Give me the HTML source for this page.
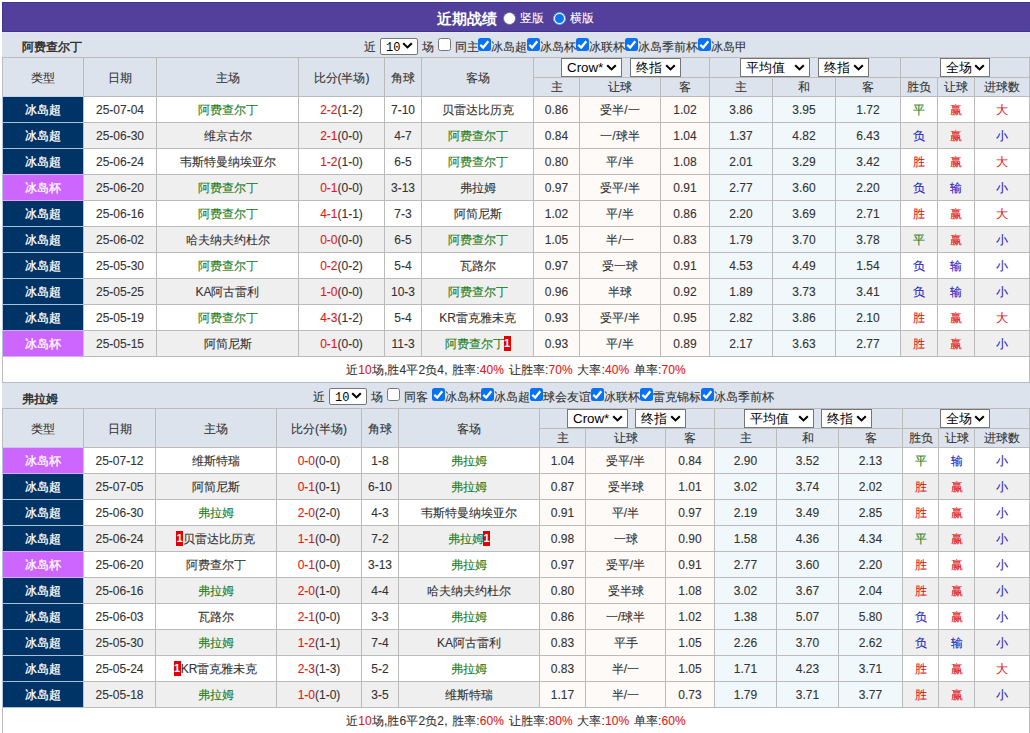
<!DOCTYPE html>
<html><head><meta charset="utf-8"><style>
html,body{margin:0;padding:0;background:#fff;}
body{width:1030px;height:733px;overflow:hidden;position:relative;font-family:"Liberation Sans",sans-serif;font-size:12px;color:#333;-webkit-text-stroke:0.1px currentColor;}
.c{position:absolute;box-sizing:border-box;text-align:center;white-space:nowrap;overflow:hidden;}
.ln{position:absolute;}
.title{position:absolute;left:2px;top:2px;width:1030px;height:30px;box-sizing:border-box;background:#52409c;border:1px solid #42368a;border-right:none;}
.team{background:#dde3ec;}
.tn{position:absolute;-webkit-text-stroke:0;font-weight:bold;font-size:12px;color:#333;white-space:nowrap;}
.hd{background:#dde3ec;}
.ht{position:absolute;text-align:center;color:#333;font-size:12px;white-space:nowrap;}
.tc{color:#fff;-webkit-text-stroke:0.3px #fff;}
.cg{color:#1c7c1c;}
.cr{color:#e01818;}
.cb{color:#1c1cc0;}
.rc{display:inline-block;-webkit-text-stroke:0;background:#e00000;color:#fff;font-weight:bold;font-size:11px;line-height:15px;height:15px;width:7px;text-align:center;vertical-align:1px;margin-left:-1px;}
.sel{position:absolute;-webkit-text-stroke:0;box-sizing:border-box;background:#fff;border:1px solid #767676;font-size:13.33px;color:#000;}
.sel .st{position:absolute;top:0;line-height:18px;}
.sel .chev{position:absolute;right:4px;top:5px;}
.flt{position:absolute;height:25px;white-space:nowrap;display:flex;align-items:center;}
.ft{font-size:12px;color:#333;margin:0 4px;}
.ft2{font-size:12px;color:#333;}
.sel10{position:absolute;-webkit-text-stroke:0;box-sizing:border-box;width:38px;height:17px;border:1px solid #767676;border-radius:2px;background:#fff;color:#000;}
.st10{position:absolute;left:5px;top:0;font-family:"Liberation Mono",monospace;font-size:12px;line-height:18px;}
.sel10 .chev{position:absolute;right:4px;top:3px;}
.ftx{position:absolute;height:25px;line-height:28px;font-size:12px;color:#333;white-space:nowrap;}
.cbx{position:absolute;width:13px;height:13px;}
.cbx svg{display:block;}
.cb0,.cb1{display:inline-block;width:13px;height:13px;margin:0 1px 0 1px;}
.cb0 svg,.cb1 svg{display:block;}
.ttl{position:absolute;top:3px;height:30px;line-height:31px;color:#fff;white-space:nowrap;}
</style></head><body>

<div class="title"></div>
<div class="ttl" style="left:437px;font-size:15px;font-weight:bold;-webkit-text-stroke:0">近期战绩</div>
<div style="position:absolute;left:503px;top:12px;width:13px;height:13px;border-radius:50%;background:#fff;box-sizing:border-box;border:1px solid #767676"></div>
<div class="ttl" style="left:520px;font-size:12px">竖版</div>
<div style="position:absolute;left:553px;top:12px;width:13px;height:13px;border-radius:50%;background:#fff;box-sizing:border-box;border:1px solid #5aa0ff"><div style="position:absolute;left:1px;top:1px;width:9px;height:9px;border-radius:50%;background:#0a74f5"></div></div>
<div class="ttl" style="left:570px;font-size:12px">横版</div>
<div style="position:absolute;left:2px;top:32px;width:1030px;height:1px;background:#e4e4fa"></div>
<div class="c team" style="left:2px;top:33px;width:1028px;height:24px;"></div>
<div class="tn" style="left:22px;top:33px;height:24px;line-height:29px">阿费查尔丁</div>
<div class="ftx" style="left:364px;top:33px">近</div><div class="sel10" style="left:380px;top:38px"><span class="st10">10</span><svg class="chev" width="11" height="7" viewBox="0 0 11 7"><path d="M1.2 1.2 L5.5 5.4 L9.8 1.2" stroke="#000" stroke-width="2.1" fill="none"/></svg></div><div class="ftx" style="left:422px;top:33px">场</div><div class="cbx" style="left:438px;top:38px"><svg width="13" height="13" viewBox="0 0 13 13"><rect x="0.5" y="0.5" width="12" height="12" rx="2" fill="#fff" stroke="#767676"/></svg></div><div class="ftx" style="left:455px;top:33px">同主</div><div class="cbx" style="left:478px;top:38px"><svg width="13" height="13" viewBox="0 0 13 13"><rect x="0" y="0" width="13" height="13" rx="2.5" fill="#0a72f0"/><path d="M2.3 6.8 L5.2 9.5 L10.3 3.2" stroke="#fff" stroke-width="2.3" fill="none"/></svg></div><div class="ftx" style="left:491px;top:33px">冰岛超</div><div class="cbx" style="left:527px;top:38px"><svg width="13" height="13" viewBox="0 0 13 13"><rect x="0" y="0" width="13" height="13" rx="2.5" fill="#0a72f0"/><path d="M2.3 6.8 L5.2 9.5 L10.3 3.2" stroke="#fff" stroke-width="2.3" fill="none"/></svg></div><div class="ftx" style="left:540px;top:33px">冰岛杯</div><div class="cbx" style="left:576px;top:38px"><svg width="13" height="13" viewBox="0 0 13 13"><rect x="0" y="0" width="13" height="13" rx="2.5" fill="#0a72f0"/><path d="M2.3 6.8 L5.2 9.5 L10.3 3.2" stroke="#fff" stroke-width="2.3" fill="none"/></svg></div><div class="ftx" style="left:589px;top:33px">冰联杯</div><div class="cbx" style="left:625px;top:38px"><svg width="13" height="13" viewBox="0 0 13 13"><rect x="0" y="0" width="13" height="13" rx="2.5" fill="#0a72f0"/><path d="M2.3 6.8 L5.2 9.5 L10.3 3.2" stroke="#fff" stroke-width="2.3" fill="none"/></svg></div><div class="ftx" style="left:638px;top:33px">冰岛季前杯</div><div class="cbx" style="left:698px;top:38px"><svg width="13" height="13" viewBox="0 0 13 13"><rect x="0" y="0" width="13" height="13" rx="2.5" fill="#0a72f0"/><path d="M2.3 6.8 L5.2 9.5 L10.3 3.2" stroke="#fff" stroke-width="2.3" fill="none"/></svg></div><div class="ftx" style="left:711px;top:33px">冰岛甲</div>
<div class="c hd" style="left:3px;top:58px;width:1026px;height:38px;"></div>
<div class="ln" style="left:2px;top:57px;width:1028px;height:1px;background:#bbb"></div>
<div class="ln" style="left:533px;top:77px;width:497px;height:1px;background:#bbb"></div>
<div class="ln" style="left:2px;top:96px;width:1028px;height:1px;background:#bbb"></div>
<div class="ht" style="left:3px;top:58px;width:80px;height:38px;line-height:40px">类型</div>
<div class="ht" style="left:84px;top:58px;width:72px;height:38px;line-height:40px">日期</div>
<div class="ht" style="left:157px;top:58px;width:141px;height:38px;line-height:40px">主场</div>
<div class="ht" style="left:299px;top:58px;width:85px;height:38px;line-height:40px">比分(半场)</div>
<div class="ht" style="left:385px;top:58px;width:36px;height:38px;line-height:40px">角球</div>
<div class="ht" style="left:422px;top:58px;width:111px;height:38px;line-height:40px">客场</div>
<div class="ht" style="left:534px;top:78px;width:45px;height:18px;line-height:19px">主</div>
<div class="ht" style="left:580px;top:78px;width:80px;height:18px;line-height:19px">让球</div>
<div class="ht" style="left:661px;top:78px;width:48px;height:18px;line-height:19px">客</div>
<div class="ht" style="left:710px;top:78px;width:62px;height:18px;line-height:19px">主</div>
<div class="ht" style="left:773px;top:78px;width:62px;height:18px;line-height:19px">和</div>
<div class="ht" style="left:836px;top:78px;width:64px;height:18px;line-height:19px">客</div>
<div class="ht" style="left:901px;top:78px;width:36px;height:18px;line-height:19px">胜负</div>
<div class="ht" style="left:938px;top:78px;width:36px;height:18px;line-height:19px">让球</div>
<div class="ht" style="left:975px;top:78px;width:54px;height:18px;line-height:19px">进球数</div>
<div class="ln" style="left:2px;top:57px;width:1px;height:39px;background:#bbb"></div>
<div class="ln" style="left:83px;top:57px;width:1px;height:39px;background:#bbb"></div>
<div class="ln" style="left:156px;top:57px;width:1px;height:39px;background:#bbb"></div>
<div class="ln" style="left:298px;top:57px;width:1px;height:39px;background:#bbb"></div>
<div class="ln" style="left:384px;top:57px;width:1px;height:39px;background:#bbb"></div>
<div class="ln" style="left:421px;top:57px;width:1px;height:39px;background:#bbb"></div>
<div class="ln" style="left:533px;top:57px;width:1px;height:39px;background:#bbb"></div>
<div class="ln" style="left:579px;top:77px;width:1px;height:19px;background:#bbb"></div>
<div class="ln" style="left:660px;top:77px;width:1px;height:19px;background:#bbb"></div>
<div class="ln" style="left:709px;top:57px;width:1px;height:39px;background:#bbb"></div>
<div class="ln" style="left:772px;top:77px;width:1px;height:19px;background:#bbb"></div>
<div class="ln" style="left:835px;top:77px;width:1px;height:19px;background:#bbb"></div>
<div class="ln" style="left:900px;top:57px;width:1px;height:39px;background:#bbb"></div>
<div class="ln" style="left:937px;top:77px;width:1px;height:19px;background:#bbb"></div>
<div class="ln" style="left:974px;top:77px;width:1px;height:19px;background:#bbb"></div>
<div class="ln" style="left:1029px;top:57px;width:1px;height:39px;background:#bbb"></div>
<div class="sel" style="left:561px;top:58px;width:61px;height:19px;border-radius:0px"><span class="st" style="left:5px">Crow*</span><svg class="chev" width="11" height="7" viewBox="0 0 11 7"><path d="M1.2 1.2 L5.5 5.4 L9.8 1.2" stroke="#000" stroke-width="2.1" fill="none"/></svg></div>
<div class="sel" style="left:630px;top:58px;width:51px;height:19px;border-radius:0px"><span class="st" style="left:5px">终指</span><svg class="chev" width="11" height="7" viewBox="0 0 11 7"><path d="M1.2 1.2 L5.5 5.4 L9.8 1.2" stroke="#000" stroke-width="2.1" fill="none"/></svg></div>
<div class="sel" style="left:740px;top:58px;width:70px;height:19px;border-radius:0px"><span class="st" style="left:5px">平均值</span><svg class="chev" width="11" height="7" viewBox="0 0 11 7"><path d="M1.2 1.2 L5.5 5.4 L9.8 1.2" stroke="#000" stroke-width="2.1" fill="none"/></svg></div>
<div class="sel" style="left:818px;top:58px;width:51px;height:19px;border-radius:0px"><span class="st" style="left:5px">终指</span><svg class="chev" width="11" height="7" viewBox="0 0 11 7"><path d="M1.2 1.2 L5.5 5.4 L9.8 1.2" stroke="#000" stroke-width="2.1" fill="none"/></svg></div>
<div class="sel" style="left:940px;top:58px;width:50px;height:19px;border-radius:0px"><span class="st" style="left:5px">全场</span><svg class="chev" width="11" height="7" viewBox="0 0 11 7"><path d="M1.2 1.2 L5.5 5.4 L9.8 1.2" stroke="#000" stroke-width="2.1" fill="none"/></svg></div>
<div class="c tc" style="left:3px;top:97px;width:80px;height:25px;background:#003366;line-height:27px">冰岛超</div>
<div class="c td" style="left:84px;top:97px;width:72px;height:25px;background:#fff;line-height:27px;">25-07-04</div>
<div class="c td" style="left:157px;top:97px;width:141px;height:25px;background:#fff;line-height:27px;"><span class="cg">阿费查尔丁</span></div>
<div class="c td" style="left:299px;top:97px;width:85px;height:25px;background:#fff;line-height:27px;"><span class="cr">2-2</span>(1-2)</div>
<div class="c td" style="left:385px;top:97px;width:36px;height:25px;background:#fff;line-height:27px;">7-10</div>
<div class="c td" style="left:422px;top:97px;width:111px;height:25px;background:#fff;line-height:27px;"><span class="">贝雷达比历克</span></div>
<div class="c td" style="left:534px;top:97px;width:45px;height:25px;background:#fefaf8;line-height:27px;">0.86</div>
<div class="c td" style="left:580px;top:97px;width:80px;height:25px;background:#fefaf8;line-height:27px;">受半/一</div>
<div class="c td" style="left:661px;top:97px;width:48px;height:25px;background:#fefaf8;line-height:27px;">1.02</div>
<div class="c td" style="left:710px;top:97px;width:62px;height:25px;background:#f0f8fb;line-height:27px;">3.86</div>
<div class="c td" style="left:773px;top:97px;width:62px;height:25px;background:#f0f8fb;line-height:27px;">3.95</div>
<div class="c td" style="left:836px;top:97px;width:64px;height:25px;background:#f0f8fb;line-height:27px;">1.72</div>
<div class="c td" style="left:901px;top:97px;width:36px;height:25px;background:#fff;line-height:27px;"><span class="cg">平</span></div>
<div class="c td" style="left:938px;top:97px;width:36px;height:25px;background:#fff;line-height:27px;"><span class="cr">赢</span></div>
<div class="c td" style="left:975px;top:97px;width:54px;height:25px;background:#fff;line-height:27px;"><span class="cr">大</span></div>
<div class="ln" style="left:2px;top:122px;width:1028px;height:1px;background:#bbb"></div>
<div class="ln" style="left:3px;top:122px;width:80px;height:1px;background:#a9c0da"></div>
<div class="ln" style="left:3px;top:96px;width:80px;height:1px;background:#c4d4e6"></div>
<div class="c tc" style="left:3px;top:123px;width:80px;height:25px;background:#003366;line-height:27px">冰岛超</div>
<div class="c td" style="left:84px;top:123px;width:72px;height:25px;background:#efefef;line-height:27px;">25-06-30</div>
<div class="c td" style="left:157px;top:123px;width:141px;height:25px;background:#efefef;line-height:27px;"><span class="">维京古尔</span></div>
<div class="c td" style="left:299px;top:123px;width:85px;height:25px;background:#efefef;line-height:27px;"><span class="cr">2-1</span>(0-0)</div>
<div class="c td" style="left:385px;top:123px;width:36px;height:25px;background:#efefef;line-height:27px;">4-7</div>
<div class="c td" style="left:422px;top:123px;width:111px;height:25px;background:#efefef;line-height:27px;"><span class="cg">阿费查尔丁</span></div>
<div class="c td" style="left:534px;top:123px;width:45px;height:25px;background:#fefaf8;line-height:27px;">0.84</div>
<div class="c td" style="left:580px;top:123px;width:80px;height:25px;background:#fefaf8;line-height:27px;">一/球半</div>
<div class="c td" style="left:661px;top:123px;width:48px;height:25px;background:#fefaf8;line-height:27px;">1.04</div>
<div class="c td" style="left:710px;top:123px;width:62px;height:25px;background:#f0f8fb;line-height:27px;">1.37</div>
<div class="c td" style="left:773px;top:123px;width:62px;height:25px;background:#f0f8fb;line-height:27px;">4.82</div>
<div class="c td" style="left:836px;top:123px;width:64px;height:25px;background:#f0f8fb;line-height:27px;">6.43</div>
<div class="c td" style="left:901px;top:123px;width:36px;height:25px;background:#efefef;line-height:27px;"><span class="cb">负</span></div>
<div class="c td" style="left:938px;top:123px;width:36px;height:25px;background:#efefef;line-height:27px;"><span class="cr">赢</span></div>
<div class="c td" style="left:975px;top:123px;width:54px;height:25px;background:#efefef;line-height:27px;"><span class="cb">小</span></div>
<div class="ln" style="left:2px;top:148px;width:1028px;height:1px;background:#bbb"></div>
<div class="ln" style="left:3px;top:148px;width:80px;height:1px;background:#a9c0da"></div>
<div class="c tc" style="left:3px;top:149px;width:80px;height:25px;background:#003366;line-height:27px">冰岛超</div>
<div class="c td" style="left:84px;top:149px;width:72px;height:25px;background:#fff;line-height:27px;">25-06-24</div>
<div class="c td" style="left:157px;top:149px;width:141px;height:25px;background:#fff;line-height:27px;"><span class="">韦斯特曼纳埃亚尔</span></div>
<div class="c td" style="left:299px;top:149px;width:85px;height:25px;background:#fff;line-height:27px;"><span class="cr">1-2</span>(1-0)</div>
<div class="c td" style="left:385px;top:149px;width:36px;height:25px;background:#fff;line-height:27px;">6-5</div>
<div class="c td" style="left:422px;top:149px;width:111px;height:25px;background:#fff;line-height:27px;"><span class="cg">阿费查尔丁</span></div>
<div class="c td" style="left:534px;top:149px;width:45px;height:25px;background:#fefaf8;line-height:27px;">0.80</div>
<div class="c td" style="left:580px;top:149px;width:80px;height:25px;background:#fefaf8;line-height:27px;">平/半</div>
<div class="c td" style="left:661px;top:149px;width:48px;height:25px;background:#fefaf8;line-height:27px;">1.08</div>
<div class="c td" style="left:710px;top:149px;width:62px;height:25px;background:#f0f8fb;line-height:27px;">2.01</div>
<div class="c td" style="left:773px;top:149px;width:62px;height:25px;background:#f0f8fb;line-height:27px;">3.29</div>
<div class="c td" style="left:836px;top:149px;width:64px;height:25px;background:#f0f8fb;line-height:27px;">3.42</div>
<div class="c td" style="left:901px;top:149px;width:36px;height:25px;background:#fff;line-height:27px;"><span class="cr">胜</span></div>
<div class="c td" style="left:938px;top:149px;width:36px;height:25px;background:#fff;line-height:27px;"><span class="cr">赢</span></div>
<div class="c td" style="left:975px;top:149px;width:54px;height:25px;background:#fff;line-height:27px;"><span class="cr">大</span></div>
<div class="ln" style="left:2px;top:174px;width:1028px;height:1px;background:#bbb"></div>
<div class="ln" style="left:3px;top:174px;width:80px;height:1px;background:#d4b0f2"></div>
<div class="c tc" style="left:3px;top:175px;width:80px;height:25px;background:#cc66ff;line-height:27px">冰岛杯</div>
<div class="c td" style="left:84px;top:175px;width:72px;height:25px;background:#efefef;line-height:27px;">25-06-20</div>
<div class="c td" style="left:157px;top:175px;width:141px;height:25px;background:#efefef;line-height:27px;"><span class="cg">阿费查尔丁</span></div>
<div class="c td" style="left:299px;top:175px;width:85px;height:25px;background:#efefef;line-height:27px;"><span class="cr">0-1</span>(0-0)</div>
<div class="c td" style="left:385px;top:175px;width:36px;height:25px;background:#efefef;line-height:27px;">3-13</div>
<div class="c td" style="left:422px;top:175px;width:111px;height:25px;background:#efefef;line-height:27px;"><span class="">弗拉姆</span></div>
<div class="c td" style="left:534px;top:175px;width:45px;height:25px;background:#fefaf8;line-height:27px;">0.97</div>
<div class="c td" style="left:580px;top:175px;width:80px;height:25px;background:#fefaf8;line-height:27px;">受平/半</div>
<div class="c td" style="left:661px;top:175px;width:48px;height:25px;background:#fefaf8;line-height:27px;">0.91</div>
<div class="c td" style="left:710px;top:175px;width:62px;height:25px;background:#f0f8fb;line-height:27px;">2.77</div>
<div class="c td" style="left:773px;top:175px;width:62px;height:25px;background:#f0f8fb;line-height:27px;">3.60</div>
<div class="c td" style="left:836px;top:175px;width:64px;height:25px;background:#f0f8fb;line-height:27px;">2.20</div>
<div class="c td" style="left:901px;top:175px;width:36px;height:25px;background:#efefef;line-height:27px;"><span class="cb">负</span></div>
<div class="c td" style="left:938px;top:175px;width:36px;height:25px;background:#efefef;line-height:27px;"><span class="cb">输</span></div>
<div class="c td" style="left:975px;top:175px;width:54px;height:25px;background:#efefef;line-height:27px;"><span class="cb">小</span></div>
<div class="ln" style="left:2px;top:200px;width:1028px;height:1px;background:#bbb"></div>
<div class="ln" style="left:3px;top:200px;width:80px;height:1px;background:#d4b0f2"></div>
<div class="c tc" style="left:3px;top:201px;width:80px;height:25px;background:#003366;line-height:27px">冰岛超</div>
<div class="c td" style="left:84px;top:201px;width:72px;height:25px;background:#fff;line-height:27px;">25-06-16</div>
<div class="c td" style="left:157px;top:201px;width:141px;height:25px;background:#fff;line-height:27px;"><span class="cg">阿费查尔丁</span></div>
<div class="c td" style="left:299px;top:201px;width:85px;height:25px;background:#fff;line-height:27px;"><span class="cr">4-1</span>(1-1)</div>
<div class="c td" style="left:385px;top:201px;width:36px;height:25px;background:#fff;line-height:27px;">7-3</div>
<div class="c td" style="left:422px;top:201px;width:111px;height:25px;background:#fff;line-height:27px;"><span class="">阿简尼斯</span></div>
<div class="c td" style="left:534px;top:201px;width:45px;height:25px;background:#fefaf8;line-height:27px;">1.02</div>
<div class="c td" style="left:580px;top:201px;width:80px;height:25px;background:#fefaf8;line-height:27px;">平/半</div>
<div class="c td" style="left:661px;top:201px;width:48px;height:25px;background:#fefaf8;line-height:27px;">0.86</div>
<div class="c td" style="left:710px;top:201px;width:62px;height:25px;background:#f0f8fb;line-height:27px;">2.20</div>
<div class="c td" style="left:773px;top:201px;width:62px;height:25px;background:#f0f8fb;line-height:27px;">3.69</div>
<div class="c td" style="left:836px;top:201px;width:64px;height:25px;background:#f0f8fb;line-height:27px;">2.71</div>
<div class="c td" style="left:901px;top:201px;width:36px;height:25px;background:#fff;line-height:27px;"><span class="cr">胜</span></div>
<div class="c td" style="left:938px;top:201px;width:36px;height:25px;background:#fff;line-height:27px;"><span class="cr">赢</span></div>
<div class="c td" style="left:975px;top:201px;width:54px;height:25px;background:#fff;line-height:27px;"><span class="cr">大</span></div>
<div class="ln" style="left:2px;top:226px;width:1028px;height:1px;background:#bbb"></div>
<div class="ln" style="left:3px;top:226px;width:80px;height:1px;background:#a9c0da"></div>
<div class="c tc" style="left:3px;top:227px;width:80px;height:25px;background:#003366;line-height:27px">冰岛超</div>
<div class="c td" style="left:84px;top:227px;width:72px;height:25px;background:#efefef;line-height:27px;">25-06-02</div>
<div class="c td" style="left:157px;top:227px;width:141px;height:25px;background:#efefef;line-height:27px;"><span class="">哈夫纳夫约杜尔</span></div>
<div class="c td" style="left:299px;top:227px;width:85px;height:25px;background:#efefef;line-height:27px;"><span class="cr">0-0</span>(0-0)</div>
<div class="c td" style="left:385px;top:227px;width:36px;height:25px;background:#efefef;line-height:27px;">6-5</div>
<div class="c td" style="left:422px;top:227px;width:111px;height:25px;background:#efefef;line-height:27px;"><span class="cg">阿费查尔丁</span></div>
<div class="c td" style="left:534px;top:227px;width:45px;height:25px;background:#fefaf8;line-height:27px;">1.05</div>
<div class="c td" style="left:580px;top:227px;width:80px;height:25px;background:#fefaf8;line-height:27px;">半/一</div>
<div class="c td" style="left:661px;top:227px;width:48px;height:25px;background:#fefaf8;line-height:27px;">0.83</div>
<div class="c td" style="left:710px;top:227px;width:62px;height:25px;background:#f0f8fb;line-height:27px;">1.79</div>
<div class="c td" style="left:773px;top:227px;width:62px;height:25px;background:#f0f8fb;line-height:27px;">3.70</div>
<div class="c td" style="left:836px;top:227px;width:64px;height:25px;background:#f0f8fb;line-height:27px;">3.78</div>
<div class="c td" style="left:901px;top:227px;width:36px;height:25px;background:#efefef;line-height:27px;"><span class="cg">平</span></div>
<div class="c td" style="left:938px;top:227px;width:36px;height:25px;background:#efefef;line-height:27px;"><span class="cr">赢</span></div>
<div class="c td" style="left:975px;top:227px;width:54px;height:25px;background:#efefef;line-height:27px;"><span class="cb">小</span></div>
<div class="ln" style="left:2px;top:252px;width:1028px;height:1px;background:#bbb"></div>
<div class="ln" style="left:3px;top:252px;width:80px;height:1px;background:#a9c0da"></div>
<div class="c tc" style="left:3px;top:253px;width:80px;height:25px;background:#003366;line-height:27px">冰岛超</div>
<div class="c td" style="left:84px;top:253px;width:72px;height:25px;background:#fff;line-height:27px;">25-05-30</div>
<div class="c td" style="left:157px;top:253px;width:141px;height:25px;background:#fff;line-height:27px;"><span class="cg">阿费查尔丁</span></div>
<div class="c td" style="left:299px;top:253px;width:85px;height:25px;background:#fff;line-height:27px;"><span class="cr">0-2</span>(0-2)</div>
<div class="c td" style="left:385px;top:253px;width:36px;height:25px;background:#fff;line-height:27px;">5-4</div>
<div class="c td" style="left:422px;top:253px;width:111px;height:25px;background:#fff;line-height:27px;"><span class="">瓦路尔</span></div>
<div class="c td" style="left:534px;top:253px;width:45px;height:25px;background:#fefaf8;line-height:27px;">0.97</div>
<div class="c td" style="left:580px;top:253px;width:80px;height:25px;background:#fefaf8;line-height:27px;">受一球</div>
<div class="c td" style="left:661px;top:253px;width:48px;height:25px;background:#fefaf8;line-height:27px;">0.91</div>
<div class="c td" style="left:710px;top:253px;width:62px;height:25px;background:#f0f8fb;line-height:27px;">4.53</div>
<div class="c td" style="left:773px;top:253px;width:62px;height:25px;background:#f0f8fb;line-height:27px;">4.49</div>
<div class="c td" style="left:836px;top:253px;width:64px;height:25px;background:#f0f8fb;line-height:27px;">1.54</div>
<div class="c td" style="left:901px;top:253px;width:36px;height:25px;background:#fff;line-height:27px;"><span class="cb">负</span></div>
<div class="c td" style="left:938px;top:253px;width:36px;height:25px;background:#fff;line-height:27px;"><span class="cb">输</span></div>
<div class="c td" style="left:975px;top:253px;width:54px;height:25px;background:#fff;line-height:27px;"><span class="cb">小</span></div>
<div class="ln" style="left:2px;top:278px;width:1028px;height:1px;background:#bbb"></div>
<div class="ln" style="left:3px;top:278px;width:80px;height:1px;background:#a9c0da"></div>
<div class="c tc" style="left:3px;top:279px;width:80px;height:25px;background:#003366;line-height:27px">冰岛超</div>
<div class="c td" style="left:84px;top:279px;width:72px;height:25px;background:#efefef;line-height:27px;">25-05-25</div>
<div class="c td" style="left:157px;top:279px;width:141px;height:25px;background:#efefef;line-height:27px;"><span class="">KA阿古雷利</span></div>
<div class="c td" style="left:299px;top:279px;width:85px;height:25px;background:#efefef;line-height:27px;"><span class="cr">1-0</span>(0-0)</div>
<div class="c td" style="left:385px;top:279px;width:36px;height:25px;background:#efefef;line-height:27px;">10-3</div>
<div class="c td" style="left:422px;top:279px;width:111px;height:25px;background:#efefef;line-height:27px;"><span class="cg">阿费查尔丁</span></div>
<div class="c td" style="left:534px;top:279px;width:45px;height:25px;background:#fefaf8;line-height:27px;">0.96</div>
<div class="c td" style="left:580px;top:279px;width:80px;height:25px;background:#fefaf8;line-height:27px;">半球</div>
<div class="c td" style="left:661px;top:279px;width:48px;height:25px;background:#fefaf8;line-height:27px;">0.92</div>
<div class="c td" style="left:710px;top:279px;width:62px;height:25px;background:#f0f8fb;line-height:27px;">1.89</div>
<div class="c td" style="left:773px;top:279px;width:62px;height:25px;background:#f0f8fb;line-height:27px;">3.73</div>
<div class="c td" style="left:836px;top:279px;width:64px;height:25px;background:#f0f8fb;line-height:27px;">3.41</div>
<div class="c td" style="left:901px;top:279px;width:36px;height:25px;background:#efefef;line-height:27px;"><span class="cb">负</span></div>
<div class="c td" style="left:938px;top:279px;width:36px;height:25px;background:#efefef;line-height:27px;"><span class="cb">输</span></div>
<div class="c td" style="left:975px;top:279px;width:54px;height:25px;background:#efefef;line-height:27px;"><span class="cb">小</span></div>
<div class="ln" style="left:2px;top:304px;width:1028px;height:1px;background:#bbb"></div>
<div class="ln" style="left:3px;top:304px;width:80px;height:1px;background:#a9c0da"></div>
<div class="c tc" style="left:3px;top:305px;width:80px;height:25px;background:#003366;line-height:27px">冰岛超</div>
<div class="c td" style="left:84px;top:305px;width:72px;height:25px;background:#fff;line-height:27px;">25-05-19</div>
<div class="c td" style="left:157px;top:305px;width:141px;height:25px;background:#fff;line-height:27px;"><span class="cg">阿费查尔丁</span></div>
<div class="c td" style="left:299px;top:305px;width:85px;height:25px;background:#fff;line-height:27px;"><span class="cr">4-3</span>(1-2)</div>
<div class="c td" style="left:385px;top:305px;width:36px;height:25px;background:#fff;line-height:27px;">5-4</div>
<div class="c td" style="left:422px;top:305px;width:111px;height:25px;background:#fff;line-height:27px;"><span class="">KR雷克雅未克</span></div>
<div class="c td" style="left:534px;top:305px;width:45px;height:25px;background:#fefaf8;line-height:27px;">0.93</div>
<div class="c td" style="left:580px;top:305px;width:80px;height:25px;background:#fefaf8;line-height:27px;">受平/半</div>
<div class="c td" style="left:661px;top:305px;width:48px;height:25px;background:#fefaf8;line-height:27px;">0.95</div>
<div class="c td" style="left:710px;top:305px;width:62px;height:25px;background:#f0f8fb;line-height:27px;">2.82</div>
<div class="c td" style="left:773px;top:305px;width:62px;height:25px;background:#f0f8fb;line-height:27px;">3.86</div>
<div class="c td" style="left:836px;top:305px;width:64px;height:25px;background:#f0f8fb;line-height:27px;">2.10</div>
<div class="c td" style="left:901px;top:305px;width:36px;height:25px;background:#fff;line-height:27px;"><span class="cr">胜</span></div>
<div class="c td" style="left:938px;top:305px;width:36px;height:25px;background:#fff;line-height:27px;"><span class="cr">赢</span></div>
<div class="c td" style="left:975px;top:305px;width:54px;height:25px;background:#fff;line-height:27px;"><span class="cr">大</span></div>
<div class="ln" style="left:2px;top:330px;width:1028px;height:1px;background:#bbb"></div>
<div class="ln" style="left:3px;top:330px;width:80px;height:1px;background:#d4b0f2"></div>
<div class="c tc" style="left:3px;top:331px;width:80px;height:25px;background:#cc66ff;line-height:27px">冰岛杯</div>
<div class="c td" style="left:84px;top:331px;width:72px;height:25px;background:#efefef;line-height:27px;">25-05-15</div>
<div class="c td" style="left:157px;top:331px;width:141px;height:25px;background:#efefef;line-height:27px;"><span class="">阿简尼斯</span></div>
<div class="c td" style="left:299px;top:331px;width:85px;height:25px;background:#efefef;line-height:27px;"><span class="cr">0-1</span>(0-0)</div>
<div class="c td" style="left:385px;top:331px;width:36px;height:25px;background:#efefef;line-height:27px;">11-3</div>
<div class="c td" style="left:422px;top:331px;width:111px;height:25px;background:#efefef;line-height:27px;"><span class="cg">阿费查尔丁</span><span class="rc">1</span></div>
<div class="c td" style="left:534px;top:331px;width:45px;height:25px;background:#fefaf8;line-height:27px;">0.93</div>
<div class="c td" style="left:580px;top:331px;width:80px;height:25px;background:#fefaf8;line-height:27px;">平/半</div>
<div class="c td" style="left:661px;top:331px;width:48px;height:25px;background:#fefaf8;line-height:27px;">0.89</div>
<div class="c td" style="left:710px;top:331px;width:62px;height:25px;background:#f0f8fb;line-height:27px;">2.17</div>
<div class="c td" style="left:773px;top:331px;width:62px;height:25px;background:#f0f8fb;line-height:27px;">3.63</div>
<div class="c td" style="left:836px;top:331px;width:64px;height:25px;background:#f0f8fb;line-height:27px;">2.77</div>
<div class="c td" style="left:901px;top:331px;width:36px;height:25px;background:#efefef;line-height:27px;"><span class="cr">胜</span></div>
<div class="c td" style="left:938px;top:331px;width:36px;height:25px;background:#efefef;line-height:27px;"><span class="cr">赢</span></div>
<div class="c td" style="left:975px;top:331px;width:54px;height:25px;background:#efefef;line-height:27px;"><span class="cb">小</span></div>
<div class="ln" style="left:2px;top:356px;width:1028px;height:1px;background:#bbb"></div>
<div class="ln" style="left:3px;top:356px;width:80px;height:1px;background:#d4b0f2"></div>
<div class="ln" style="left:2px;top:96px;width:1px;height:261px;background:#b4c6dc"></div>
<div class="ln" style="left:83px;top:96px;width:1px;height:261px;background:#b4c6dc"></div>
<div class="ln" style="left:156px;top:96px;width:1px;height:261px;background:#bbb"></div>
<div class="ln" style="left:298px;top:96px;width:1px;height:261px;background:#bbb"></div>
<div class="ln" style="left:384px;top:96px;width:1px;height:261px;background:#bbb"></div>
<div class="ln" style="left:421px;top:96px;width:1px;height:261px;background:#bbb"></div>
<div class="ln" style="left:533px;top:96px;width:1px;height:261px;background:#bbb"></div>
<div class="ln" style="left:579px;top:96px;width:1px;height:261px;background:#bbb"></div>
<div class="ln" style="left:660px;top:96px;width:1px;height:261px;background:#bbb"></div>
<div class="ln" style="left:709px;top:96px;width:1px;height:261px;background:#bbb"></div>
<div class="ln" style="left:772px;top:96px;width:1px;height:261px;background:#bbb"></div>
<div class="ln" style="left:835px;top:96px;width:1px;height:261px;background:#bbb"></div>
<div class="ln" style="left:900px;top:96px;width:1px;height:261px;background:#bbb"></div>
<div class="ln" style="left:937px;top:96px;width:1px;height:261px;background:#bbb"></div>
<div class="ln" style="left:974px;top:96px;width:1px;height:261px;background:#bbb"></div>
<div class="ln" style="left:1029px;top:96px;width:1px;height:261px;background:#bbb"></div>
<div class="c sum" style="left:3px;top:357px;width:1026px;height:25px;background:#fff;line-height:27px;word-spacing:1px;letter-spacing:0.12px">近<span class="cr">10</span>场,胜4平2负4, 胜率:<span class="cr">40%</span> 让胜率:<span class="cr">70%</span> 大率:<span class="cr">40%</span> 单率:<span class="cr">70%</span></div>
<div class="ln" style="left:2px;top:356px;width:1px;height:27px;background:#bbb"></div>
<div class="ln" style="left:1029px;top:356px;width:1px;height:27px;background:#bbb"></div>
<div class="ln" style="left:2px;top:382px;width:1028px;height:1px;background:#bbb"></div>
<div class="c team" style="left:2px;top:383px;width:1028px;height:25px;"></div>
<div class="tn" style="left:22px;top:383px;height:25px;line-height:32px">弗拉姆</div>
<div class="ftx" style="left:313px;top:383px">近</div><div class="sel10" style="left:329px;top:388px"><span class="st10">10</span><svg class="chev" width="11" height="7" viewBox="0 0 11 7"><path d="M1.2 1.2 L5.5 5.4 L9.8 1.2" stroke="#000" stroke-width="2.1" fill="none"/></svg></div><div class="ftx" style="left:371px;top:383px">场</div><div class="cbx" style="left:387px;top:388px"><svg width="13" height="13" viewBox="0 0 13 13"><rect x="0.5" y="0.5" width="12" height="12" rx="2" fill="#fff" stroke="#767676"/></svg></div><div class="ftx" style="left:404px;top:383px">同客</div><div class="cbx" style="left:432px;top:388px"><svg width="13" height="13" viewBox="0 0 13 13"><rect x="0" y="0" width="13" height="13" rx="2.5" fill="#0a72f0"/><path d="M2.3 6.8 L5.2 9.5 L10.3 3.2" stroke="#fff" stroke-width="2.3" fill="none"/></svg></div><div class="ftx" style="left:445px;top:383px">冰岛杯</div><div class="cbx" style="left:481px;top:388px"><svg width="13" height="13" viewBox="0 0 13 13"><rect x="0" y="0" width="13" height="13" rx="2.5" fill="#0a72f0"/><path d="M2.3 6.8 L5.2 9.5 L10.3 3.2" stroke="#fff" stroke-width="2.3" fill="none"/></svg></div><div class="ftx" style="left:494px;top:383px">冰岛超</div><div class="cbx" style="left:530px;top:388px"><svg width="13" height="13" viewBox="0 0 13 13"><rect x="0" y="0" width="13" height="13" rx="2.5" fill="#0a72f0"/><path d="M2.3 6.8 L5.2 9.5 L10.3 3.2" stroke="#fff" stroke-width="2.3" fill="none"/></svg></div><div class="ftx" style="left:543px;top:383px">球会友谊</div><div class="cbx" style="left:591px;top:388px"><svg width="13" height="13" viewBox="0 0 13 13"><rect x="0" y="0" width="13" height="13" rx="2.5" fill="#0a72f0"/><path d="M2.3 6.8 L5.2 9.5 L10.3 3.2" stroke="#fff" stroke-width="2.3" fill="none"/></svg></div><div class="ftx" style="left:604px;top:383px">冰联杯</div><div class="cbx" style="left:640px;top:388px"><svg width="13" height="13" viewBox="0 0 13 13"><rect x="0" y="0" width="13" height="13" rx="2.5" fill="#0a72f0"/><path d="M2.3 6.8 L5.2 9.5 L10.3 3.2" stroke="#fff" stroke-width="2.3" fill="none"/></svg></div><div class="ftx" style="left:653px;top:383px">雷克锦标</div><div class="cbx" style="left:701px;top:388px"><svg width="13" height="13" viewBox="0 0 13 13"><rect x="0" y="0" width="13" height="13" rx="2.5" fill="#0a72f0"/><path d="M2.3 6.8 L5.2 9.5 L10.3 3.2" stroke="#fff" stroke-width="2.3" fill="none"/></svg></div><div class="ftx" style="left:714px;top:383px">冰岛季前杯</div>
<div class="c hd" style="left:3px;top:409px;width:1026px;height:38px;"></div>
<div class="ln" style="left:2px;top:408px;width:1028px;height:1px;background:#bbb"></div>
<div class="ln" style="left:539px;top:428px;width:491px;height:1px;background:#bbb"></div>
<div class="ln" style="left:2px;top:447px;width:1028px;height:1px;background:#bbb"></div>
<div class="ht" style="left:3px;top:409px;width:80px;height:38px;line-height:40px">类型</div>
<div class="ht" style="left:84px;top:409px;width:71px;height:38px;line-height:40px">日期</div>
<div class="ht" style="left:156px;top:409px;width:120px;height:38px;line-height:40px">主场</div>
<div class="ht" style="left:277px;top:409px;width:84px;height:38px;line-height:40px">比分(半场)</div>
<div class="ht" style="left:362px;top:409px;width:36px;height:38px;line-height:40px">角球</div>
<div class="ht" style="left:399px;top:409px;width:140px;height:38px;line-height:40px">客场</div>
<div class="ht" style="left:540px;top:429px;width:45px;height:18px;line-height:19px">主</div>
<div class="ht" style="left:586px;top:429px;width:79px;height:18px;line-height:19px">让球</div>
<div class="ht" style="left:666px;top:429px;width:48px;height:18px;line-height:19px">客</div>
<div class="ht" style="left:715px;top:429px;width:61px;height:18px;line-height:19px">主</div>
<div class="ht" style="left:777px;top:429px;width:61px;height:18px;line-height:19px">和</div>
<div class="ht" style="left:839px;top:429px;width:63px;height:18px;line-height:19px">客</div>
<div class="ht" style="left:903px;top:429px;width:35px;height:18px;line-height:19px">胜负</div>
<div class="ht" style="left:939px;top:429px;width:35px;height:18px;line-height:19px">让球</div>
<div class="ht" style="left:975px;top:429px;width:54px;height:18px;line-height:19px">进球数</div>
<div class="ln" style="left:2px;top:408px;width:1px;height:39px;background:#bbb"></div>
<div class="ln" style="left:83px;top:408px;width:1px;height:39px;background:#bbb"></div>
<div class="ln" style="left:155px;top:408px;width:1px;height:39px;background:#bbb"></div>
<div class="ln" style="left:276px;top:408px;width:1px;height:39px;background:#bbb"></div>
<div class="ln" style="left:361px;top:408px;width:1px;height:39px;background:#bbb"></div>
<div class="ln" style="left:398px;top:408px;width:1px;height:39px;background:#bbb"></div>
<div class="ln" style="left:539px;top:408px;width:1px;height:39px;background:#bbb"></div>
<div class="ln" style="left:585px;top:428px;width:1px;height:19px;background:#bbb"></div>
<div class="ln" style="left:665px;top:428px;width:1px;height:19px;background:#bbb"></div>
<div class="ln" style="left:714px;top:408px;width:1px;height:39px;background:#bbb"></div>
<div class="ln" style="left:776px;top:428px;width:1px;height:19px;background:#bbb"></div>
<div class="ln" style="left:838px;top:428px;width:1px;height:19px;background:#bbb"></div>
<div class="ln" style="left:902px;top:408px;width:1px;height:39px;background:#bbb"></div>
<div class="ln" style="left:938px;top:428px;width:1px;height:19px;background:#bbb"></div>
<div class="ln" style="left:974px;top:428px;width:1px;height:19px;background:#bbb"></div>
<div class="ln" style="left:1029px;top:408px;width:1px;height:39px;background:#bbb"></div>
<div class="sel" style="left:567px;top:409px;width:61px;height:19px;border-radius:0px"><span class="st" style="left:5px">Crow*</span><svg class="chev" width="11" height="7" viewBox="0 0 11 7"><path d="M1.2 1.2 L5.5 5.4 L9.8 1.2" stroke="#000" stroke-width="2.1" fill="none"/></svg></div>
<div class="sel" style="left:635px;top:409px;width:51px;height:19px;border-radius:0px"><span class="st" style="left:5px">终指</span><svg class="chev" width="11" height="7" viewBox="0 0 11 7"><path d="M1.2 1.2 L5.5 5.4 L9.8 1.2" stroke="#000" stroke-width="2.1" fill="none"/></svg></div>
<div class="sel" style="left:744px;top:409px;width:70px;height:19px;border-radius:0px"><span class="st" style="left:5px">平均值</span><svg class="chev" width="11" height="7" viewBox="0 0 11 7"><path d="M1.2 1.2 L5.5 5.4 L9.8 1.2" stroke="#000" stroke-width="2.1" fill="none"/></svg></div>
<div class="sel" style="left:821px;top:409px;width:51px;height:19px;border-radius:0px"><span class="st" style="left:5px">终指</span><svg class="chev" width="11" height="7" viewBox="0 0 11 7"><path d="M1.2 1.2 L5.5 5.4 L9.8 1.2" stroke="#000" stroke-width="2.1" fill="none"/></svg></div>
<div class="sel" style="left:940px;top:409px;width:50px;height:19px;border-radius:0px"><span class="st" style="left:5px">全场</span><svg class="chev" width="11" height="7" viewBox="0 0 11 7"><path d="M1.2 1.2 L5.5 5.4 L9.8 1.2" stroke="#000" stroke-width="2.1" fill="none"/></svg></div>
<div class="c tc" style="left:3px;top:448px;width:80px;height:25px;background:#cc66ff;line-height:27px">冰岛杯</div>
<div class="c td" style="left:84px;top:448px;width:71px;height:25px;background:#fff;line-height:27px;">25-07-12</div>
<div class="c td" style="left:156px;top:448px;width:120px;height:25px;background:#fff;line-height:27px;"><span class="">维斯特瑞</span></div>
<div class="c td" style="left:277px;top:448px;width:84px;height:25px;background:#fff;line-height:27px;"><span class="cr">0-0</span>(0-0)</div>
<div class="c td" style="left:362px;top:448px;width:36px;height:25px;background:#fff;line-height:27px;">1-8</div>
<div class="c td" style="left:399px;top:448px;width:140px;height:25px;background:#fff;line-height:27px;"><span class="cg">弗拉姆</span></div>
<div class="c td" style="left:540px;top:448px;width:45px;height:25px;background:#fefaf8;line-height:27px;">1.04</div>
<div class="c td" style="left:586px;top:448px;width:79px;height:25px;background:#fefaf8;line-height:27px;">受平/半</div>
<div class="c td" style="left:666px;top:448px;width:48px;height:25px;background:#fefaf8;line-height:27px;">0.84</div>
<div class="c td" style="left:715px;top:448px;width:61px;height:25px;background:#f0f8fb;line-height:27px;">2.90</div>
<div class="c td" style="left:777px;top:448px;width:61px;height:25px;background:#f0f8fb;line-height:27px;">3.52</div>
<div class="c td" style="left:839px;top:448px;width:63px;height:25px;background:#f0f8fb;line-height:27px;">2.13</div>
<div class="c td" style="left:903px;top:448px;width:35px;height:25px;background:#fff;line-height:27px;"><span class="cg">平</span></div>
<div class="c td" style="left:939px;top:448px;width:35px;height:25px;background:#fff;line-height:27px;"><span class="cb">输</span></div>
<div class="c td" style="left:975px;top:448px;width:54px;height:25px;background:#fff;line-height:27px;"><span class="cb">小</span></div>
<div class="ln" style="left:2px;top:473px;width:1028px;height:1px;background:#bbb"></div>
<div class="ln" style="left:3px;top:473px;width:80px;height:1px;background:#d4b0f2"></div>
<div class="ln" style="left:3px;top:447px;width:80px;height:1px;background:#d8c0f4"></div>
<div class="c tc" style="left:3px;top:474px;width:80px;height:25px;background:#003366;line-height:27px">冰岛超</div>
<div class="c td" style="left:84px;top:474px;width:71px;height:25px;background:#efefef;line-height:27px;">25-07-05</div>
<div class="c td" style="left:156px;top:474px;width:120px;height:25px;background:#efefef;line-height:27px;"><span class="">阿简尼斯</span></div>
<div class="c td" style="left:277px;top:474px;width:84px;height:25px;background:#efefef;line-height:27px;"><span class="cr">0-1</span>(0-1)</div>
<div class="c td" style="left:362px;top:474px;width:36px;height:25px;background:#efefef;line-height:27px;">6-10</div>
<div class="c td" style="left:399px;top:474px;width:140px;height:25px;background:#efefef;line-height:27px;"><span class="cg">弗拉姆</span></div>
<div class="c td" style="left:540px;top:474px;width:45px;height:25px;background:#fefaf8;line-height:27px;">0.87</div>
<div class="c td" style="left:586px;top:474px;width:79px;height:25px;background:#fefaf8;line-height:27px;">受半球</div>
<div class="c td" style="left:666px;top:474px;width:48px;height:25px;background:#fefaf8;line-height:27px;">1.01</div>
<div class="c td" style="left:715px;top:474px;width:61px;height:25px;background:#f0f8fb;line-height:27px;">3.02</div>
<div class="c td" style="left:777px;top:474px;width:61px;height:25px;background:#f0f8fb;line-height:27px;">3.74</div>
<div class="c td" style="left:839px;top:474px;width:63px;height:25px;background:#f0f8fb;line-height:27px;">2.02</div>
<div class="c td" style="left:903px;top:474px;width:35px;height:25px;background:#efefef;line-height:27px;"><span class="cr">胜</span></div>
<div class="c td" style="left:939px;top:474px;width:35px;height:25px;background:#efefef;line-height:27px;"><span class="cr">赢</span></div>
<div class="c td" style="left:975px;top:474px;width:54px;height:25px;background:#efefef;line-height:27px;"><span class="cb">小</span></div>
<div class="ln" style="left:2px;top:499px;width:1028px;height:1px;background:#bbb"></div>
<div class="ln" style="left:3px;top:499px;width:80px;height:1px;background:#a9c0da"></div>
<div class="c tc" style="left:3px;top:500px;width:80px;height:25px;background:#003366;line-height:27px">冰岛超</div>
<div class="c td" style="left:84px;top:500px;width:71px;height:25px;background:#fff;line-height:27px;">25-06-30</div>
<div class="c td" style="left:156px;top:500px;width:120px;height:25px;background:#fff;line-height:27px;"><span class="cg">弗拉姆</span></div>
<div class="c td" style="left:277px;top:500px;width:84px;height:25px;background:#fff;line-height:27px;"><span class="cr">2-0</span>(2-0)</div>
<div class="c td" style="left:362px;top:500px;width:36px;height:25px;background:#fff;line-height:27px;">4-3</div>
<div class="c td" style="left:399px;top:500px;width:140px;height:25px;background:#fff;line-height:27px;"><span class="">韦斯特曼纳埃亚尔</span></div>
<div class="c td" style="left:540px;top:500px;width:45px;height:25px;background:#fefaf8;line-height:27px;">0.91</div>
<div class="c td" style="left:586px;top:500px;width:79px;height:25px;background:#fefaf8;line-height:27px;">平/半</div>
<div class="c td" style="left:666px;top:500px;width:48px;height:25px;background:#fefaf8;line-height:27px;">0.97</div>
<div class="c td" style="left:715px;top:500px;width:61px;height:25px;background:#f0f8fb;line-height:27px;">2.19</div>
<div class="c td" style="left:777px;top:500px;width:61px;height:25px;background:#f0f8fb;line-height:27px;">3.49</div>
<div class="c td" style="left:839px;top:500px;width:63px;height:25px;background:#f0f8fb;line-height:27px;">2.85</div>
<div class="c td" style="left:903px;top:500px;width:35px;height:25px;background:#fff;line-height:27px;"><span class="cr">胜</span></div>
<div class="c td" style="left:939px;top:500px;width:35px;height:25px;background:#fff;line-height:27px;"><span class="cr">赢</span></div>
<div class="c td" style="left:975px;top:500px;width:54px;height:25px;background:#fff;line-height:27px;"><span class="cb">小</span></div>
<div class="ln" style="left:2px;top:525px;width:1028px;height:1px;background:#bbb"></div>
<div class="ln" style="left:3px;top:525px;width:80px;height:1px;background:#a9c0da"></div>
<div class="c tc" style="left:3px;top:526px;width:80px;height:25px;background:#003366;line-height:27px">冰岛超</div>
<div class="c td" style="left:84px;top:526px;width:71px;height:25px;background:#efefef;line-height:27px;">25-06-24</div>
<div class="c td" style="left:156px;top:526px;width:120px;height:25px;background:#efefef;line-height:27px;"><span class="rc">1</span><span class="">贝雷达比历克</span></div>
<div class="c td" style="left:277px;top:526px;width:84px;height:25px;background:#efefef;line-height:27px;"><span class="cr">1-1</span>(0-0)</div>
<div class="c td" style="left:362px;top:526px;width:36px;height:25px;background:#efefef;line-height:27px;">7-2</div>
<div class="c td" style="left:399px;top:526px;width:140px;height:25px;background:#efefef;line-height:27px;"><span class="cg">弗拉姆</span><span class="rc">1</span></div>
<div class="c td" style="left:540px;top:526px;width:45px;height:25px;background:#fefaf8;line-height:27px;">0.98</div>
<div class="c td" style="left:586px;top:526px;width:79px;height:25px;background:#fefaf8;line-height:27px;">一球</div>
<div class="c td" style="left:666px;top:526px;width:48px;height:25px;background:#fefaf8;line-height:27px;">0.90</div>
<div class="c td" style="left:715px;top:526px;width:61px;height:25px;background:#f0f8fb;line-height:27px;">1.58</div>
<div class="c td" style="left:777px;top:526px;width:61px;height:25px;background:#f0f8fb;line-height:27px;">4.36</div>
<div class="c td" style="left:839px;top:526px;width:63px;height:25px;background:#f0f8fb;line-height:27px;">4.34</div>
<div class="c td" style="left:903px;top:526px;width:35px;height:25px;background:#efefef;line-height:27px;"><span class="cg">平</span></div>
<div class="c td" style="left:939px;top:526px;width:35px;height:25px;background:#efefef;line-height:27px;"><span class="cr">赢</span></div>
<div class="c td" style="left:975px;top:526px;width:54px;height:25px;background:#efefef;line-height:27px;"><span class="cb">小</span></div>
<div class="ln" style="left:2px;top:551px;width:1028px;height:1px;background:#bbb"></div>
<div class="ln" style="left:3px;top:551px;width:80px;height:1px;background:#d4b0f2"></div>
<div class="c tc" style="left:3px;top:552px;width:80px;height:25px;background:#cc66ff;line-height:27px">冰岛杯</div>
<div class="c td" style="left:84px;top:552px;width:71px;height:25px;background:#fff;line-height:27px;">25-06-20</div>
<div class="c td" style="left:156px;top:552px;width:120px;height:25px;background:#fff;line-height:27px;"><span class="">阿费查尔丁</span></div>
<div class="c td" style="left:277px;top:552px;width:84px;height:25px;background:#fff;line-height:27px;"><span class="cr">0-1</span>(0-0)</div>
<div class="c td" style="left:362px;top:552px;width:36px;height:25px;background:#fff;line-height:27px;">3-13</div>
<div class="c td" style="left:399px;top:552px;width:140px;height:25px;background:#fff;line-height:27px;"><span class="cg">弗拉姆</span></div>
<div class="c td" style="left:540px;top:552px;width:45px;height:25px;background:#fefaf8;line-height:27px;">0.97</div>
<div class="c td" style="left:586px;top:552px;width:79px;height:25px;background:#fefaf8;line-height:27px;">受平/半</div>
<div class="c td" style="left:666px;top:552px;width:48px;height:25px;background:#fefaf8;line-height:27px;">0.91</div>
<div class="c td" style="left:715px;top:552px;width:61px;height:25px;background:#f0f8fb;line-height:27px;">2.77</div>
<div class="c td" style="left:777px;top:552px;width:61px;height:25px;background:#f0f8fb;line-height:27px;">3.60</div>
<div class="c td" style="left:839px;top:552px;width:63px;height:25px;background:#f0f8fb;line-height:27px;">2.20</div>
<div class="c td" style="left:903px;top:552px;width:35px;height:25px;background:#fff;line-height:27px;"><span class="cr">胜</span></div>
<div class="c td" style="left:939px;top:552px;width:35px;height:25px;background:#fff;line-height:27px;"><span class="cr">赢</span></div>
<div class="c td" style="left:975px;top:552px;width:54px;height:25px;background:#fff;line-height:27px;"><span class="cb">小</span></div>
<div class="ln" style="left:2px;top:577px;width:1028px;height:1px;background:#bbb"></div>
<div class="ln" style="left:3px;top:577px;width:80px;height:1px;background:#d4b0f2"></div>
<div class="c tc" style="left:3px;top:578px;width:80px;height:25px;background:#003366;line-height:27px">冰岛超</div>
<div class="c td" style="left:84px;top:578px;width:71px;height:25px;background:#efefef;line-height:27px;">25-06-16</div>
<div class="c td" style="left:156px;top:578px;width:120px;height:25px;background:#efefef;line-height:27px;"><span class="cg">弗拉姆</span></div>
<div class="c td" style="left:277px;top:578px;width:84px;height:25px;background:#efefef;line-height:27px;"><span class="cr">2-0</span>(1-0)</div>
<div class="c td" style="left:362px;top:578px;width:36px;height:25px;background:#efefef;line-height:27px;">4-4</div>
<div class="c td" style="left:399px;top:578px;width:140px;height:25px;background:#efefef;line-height:27px;"><span class="">哈夫纳夫约杜尔</span></div>
<div class="c td" style="left:540px;top:578px;width:45px;height:25px;background:#fefaf8;line-height:27px;">0.80</div>
<div class="c td" style="left:586px;top:578px;width:79px;height:25px;background:#fefaf8;line-height:27px;">受半球</div>
<div class="c td" style="left:666px;top:578px;width:48px;height:25px;background:#fefaf8;line-height:27px;">1.08</div>
<div class="c td" style="left:715px;top:578px;width:61px;height:25px;background:#f0f8fb;line-height:27px;">3.02</div>
<div class="c td" style="left:777px;top:578px;width:61px;height:25px;background:#f0f8fb;line-height:27px;">3.67</div>
<div class="c td" style="left:839px;top:578px;width:63px;height:25px;background:#f0f8fb;line-height:27px;">2.04</div>
<div class="c td" style="left:903px;top:578px;width:35px;height:25px;background:#efefef;line-height:27px;"><span class="cr">胜</span></div>
<div class="c td" style="left:939px;top:578px;width:35px;height:25px;background:#efefef;line-height:27px;"><span class="cr">赢</span></div>
<div class="c td" style="left:975px;top:578px;width:54px;height:25px;background:#efefef;line-height:27px;"><span class="cb">小</span></div>
<div class="ln" style="left:2px;top:603px;width:1028px;height:1px;background:#bbb"></div>
<div class="ln" style="left:3px;top:603px;width:80px;height:1px;background:#a9c0da"></div>
<div class="c tc" style="left:3px;top:604px;width:80px;height:25px;background:#003366;line-height:27px">冰岛超</div>
<div class="c td" style="left:84px;top:604px;width:71px;height:25px;background:#fff;line-height:27px;">25-06-03</div>
<div class="c td" style="left:156px;top:604px;width:120px;height:25px;background:#fff;line-height:27px;"><span class="">瓦路尔</span></div>
<div class="c td" style="left:277px;top:604px;width:84px;height:25px;background:#fff;line-height:27px;"><span class="cr">2-1</span>(0-0)</div>
<div class="c td" style="left:362px;top:604px;width:36px;height:25px;background:#fff;line-height:27px;">3-3</div>
<div class="c td" style="left:399px;top:604px;width:140px;height:25px;background:#fff;line-height:27px;"><span class="cg">弗拉姆</span></div>
<div class="c td" style="left:540px;top:604px;width:45px;height:25px;background:#fefaf8;line-height:27px;">0.86</div>
<div class="c td" style="left:586px;top:604px;width:79px;height:25px;background:#fefaf8;line-height:27px;">一/球半</div>
<div class="c td" style="left:666px;top:604px;width:48px;height:25px;background:#fefaf8;line-height:27px;">1.02</div>
<div class="c td" style="left:715px;top:604px;width:61px;height:25px;background:#f0f8fb;line-height:27px;">1.38</div>
<div class="c td" style="left:777px;top:604px;width:61px;height:25px;background:#f0f8fb;line-height:27px;">5.07</div>
<div class="c td" style="left:839px;top:604px;width:63px;height:25px;background:#f0f8fb;line-height:27px;">5.80</div>
<div class="c td" style="left:903px;top:604px;width:35px;height:25px;background:#fff;line-height:27px;"><span class="cb">负</span></div>
<div class="c td" style="left:939px;top:604px;width:35px;height:25px;background:#fff;line-height:27px;"><span class="cr">赢</span></div>
<div class="c td" style="left:975px;top:604px;width:54px;height:25px;background:#fff;line-height:27px;"><span class="cb">小</span></div>
<div class="ln" style="left:2px;top:629px;width:1028px;height:1px;background:#bbb"></div>
<div class="ln" style="left:3px;top:629px;width:80px;height:1px;background:#a9c0da"></div>
<div class="c tc" style="left:3px;top:630px;width:80px;height:25px;background:#003366;line-height:27px">冰岛超</div>
<div class="c td" style="left:84px;top:630px;width:71px;height:25px;background:#efefef;line-height:27px;">25-05-30</div>
<div class="c td" style="left:156px;top:630px;width:120px;height:25px;background:#efefef;line-height:27px;"><span class="cg">弗拉姆</span></div>
<div class="c td" style="left:277px;top:630px;width:84px;height:25px;background:#efefef;line-height:27px;"><span class="cr">1-2</span>(1-1)</div>
<div class="c td" style="left:362px;top:630px;width:36px;height:25px;background:#efefef;line-height:27px;">7-4</div>
<div class="c td" style="left:399px;top:630px;width:140px;height:25px;background:#efefef;line-height:27px;"><span class="">KA阿古雷利</span></div>
<div class="c td" style="left:540px;top:630px;width:45px;height:25px;background:#fefaf8;line-height:27px;">0.83</div>
<div class="c td" style="left:586px;top:630px;width:79px;height:25px;background:#fefaf8;line-height:27px;">平手</div>
<div class="c td" style="left:666px;top:630px;width:48px;height:25px;background:#fefaf8;line-height:27px;">1.05</div>
<div class="c td" style="left:715px;top:630px;width:61px;height:25px;background:#f0f8fb;line-height:27px;">2.26</div>
<div class="c td" style="left:777px;top:630px;width:61px;height:25px;background:#f0f8fb;line-height:27px;">3.70</div>
<div class="c td" style="left:839px;top:630px;width:63px;height:25px;background:#f0f8fb;line-height:27px;">2.62</div>
<div class="c td" style="left:903px;top:630px;width:35px;height:25px;background:#efefef;line-height:27px;"><span class="cb">负</span></div>
<div class="c td" style="left:939px;top:630px;width:35px;height:25px;background:#efefef;line-height:27px;"><span class="cb">输</span></div>
<div class="c td" style="left:975px;top:630px;width:54px;height:25px;background:#efefef;line-height:27px;"><span class="cb">小</span></div>
<div class="ln" style="left:2px;top:655px;width:1028px;height:1px;background:#bbb"></div>
<div class="ln" style="left:3px;top:655px;width:80px;height:1px;background:#a9c0da"></div>
<div class="c tc" style="left:3px;top:656px;width:80px;height:25px;background:#003366;line-height:27px">冰岛超</div>
<div class="c td" style="left:84px;top:656px;width:71px;height:25px;background:#fff;line-height:27px;">25-05-24</div>
<div class="c td" style="left:156px;top:656px;width:120px;height:25px;background:#fff;line-height:27px;"><span class="rc">1</span><span class="">KR雷克雅未克</span></div>
<div class="c td" style="left:277px;top:656px;width:84px;height:25px;background:#fff;line-height:27px;"><span class="cr">2-3</span>(1-3)</div>
<div class="c td" style="left:362px;top:656px;width:36px;height:25px;background:#fff;line-height:27px;">5-2</div>
<div class="c td" style="left:399px;top:656px;width:140px;height:25px;background:#fff;line-height:27px;"><span class="cg">弗拉姆</span></div>
<div class="c td" style="left:540px;top:656px;width:45px;height:25px;background:#fefaf8;line-height:27px;">0.83</div>
<div class="c td" style="left:586px;top:656px;width:79px;height:25px;background:#fefaf8;line-height:27px;">半/一</div>
<div class="c td" style="left:666px;top:656px;width:48px;height:25px;background:#fefaf8;line-height:27px;">1.05</div>
<div class="c td" style="left:715px;top:656px;width:61px;height:25px;background:#f0f8fb;line-height:27px;">1.71</div>
<div class="c td" style="left:777px;top:656px;width:61px;height:25px;background:#f0f8fb;line-height:27px;">4.23</div>
<div class="c td" style="left:839px;top:656px;width:63px;height:25px;background:#f0f8fb;line-height:27px;">3.71</div>
<div class="c td" style="left:903px;top:656px;width:35px;height:25px;background:#fff;line-height:27px;"><span class="cr">胜</span></div>
<div class="c td" style="left:939px;top:656px;width:35px;height:25px;background:#fff;line-height:27px;"><span class="cr">赢</span></div>
<div class="c td" style="left:975px;top:656px;width:54px;height:25px;background:#fff;line-height:27px;"><span class="cr">大</span></div>
<div class="ln" style="left:2px;top:681px;width:1028px;height:1px;background:#bbb"></div>
<div class="ln" style="left:3px;top:681px;width:80px;height:1px;background:#a9c0da"></div>
<div class="c tc" style="left:3px;top:682px;width:80px;height:25px;background:#003366;line-height:27px">冰岛超</div>
<div class="c td" style="left:84px;top:682px;width:71px;height:25px;background:#efefef;line-height:27px;">25-05-18</div>
<div class="c td" style="left:156px;top:682px;width:120px;height:25px;background:#efefef;line-height:27px;"><span class="cg">弗拉姆</span></div>
<div class="c td" style="left:277px;top:682px;width:84px;height:25px;background:#efefef;line-height:27px;"><span class="cr">1-0</span>(1-0)</div>
<div class="c td" style="left:362px;top:682px;width:36px;height:25px;background:#efefef;line-height:27px;">3-5</div>
<div class="c td" style="left:399px;top:682px;width:140px;height:25px;background:#efefef;line-height:27px;"><span class="">维斯特瑞</span></div>
<div class="c td" style="left:540px;top:682px;width:45px;height:25px;background:#fefaf8;line-height:27px;">1.17</div>
<div class="c td" style="left:586px;top:682px;width:79px;height:25px;background:#fefaf8;line-height:27px;">半/一</div>
<div class="c td" style="left:666px;top:682px;width:48px;height:25px;background:#fefaf8;line-height:27px;">0.73</div>
<div class="c td" style="left:715px;top:682px;width:61px;height:25px;background:#f0f8fb;line-height:27px;">1.79</div>
<div class="c td" style="left:777px;top:682px;width:61px;height:25px;background:#f0f8fb;line-height:27px;">3.71</div>
<div class="c td" style="left:839px;top:682px;width:63px;height:25px;background:#f0f8fb;line-height:27px;">3.77</div>
<div class="c td" style="left:903px;top:682px;width:35px;height:25px;background:#efefef;line-height:27px;"><span class="cr">胜</span></div>
<div class="c td" style="left:939px;top:682px;width:35px;height:25px;background:#efefef;line-height:27px;"><span class="cr">赢</span></div>
<div class="c td" style="left:975px;top:682px;width:54px;height:25px;background:#efefef;line-height:27px;"><span class="cb">小</span></div>
<div class="ln" style="left:2px;top:707px;width:1028px;height:1px;background:#bbb"></div>
<div class="ln" style="left:3px;top:707px;width:80px;height:1px;background:#a9c0da"></div>
<div class="ln" style="left:2px;top:447px;width:1px;height:261px;background:#b4c6dc"></div>
<div class="ln" style="left:83px;top:447px;width:1px;height:261px;background:#b4c6dc"></div>
<div class="ln" style="left:155px;top:447px;width:1px;height:261px;background:#bbb"></div>
<div class="ln" style="left:276px;top:447px;width:1px;height:261px;background:#bbb"></div>
<div class="ln" style="left:361px;top:447px;width:1px;height:261px;background:#bbb"></div>
<div class="ln" style="left:398px;top:447px;width:1px;height:261px;background:#bbb"></div>
<div class="ln" style="left:539px;top:447px;width:1px;height:261px;background:#bbb"></div>
<div class="ln" style="left:585px;top:447px;width:1px;height:261px;background:#bbb"></div>
<div class="ln" style="left:665px;top:447px;width:1px;height:261px;background:#bbb"></div>
<div class="ln" style="left:714px;top:447px;width:1px;height:261px;background:#bbb"></div>
<div class="ln" style="left:776px;top:447px;width:1px;height:261px;background:#bbb"></div>
<div class="ln" style="left:838px;top:447px;width:1px;height:261px;background:#bbb"></div>
<div class="ln" style="left:902px;top:447px;width:1px;height:261px;background:#bbb"></div>
<div class="ln" style="left:938px;top:447px;width:1px;height:261px;background:#bbb"></div>
<div class="ln" style="left:974px;top:447px;width:1px;height:261px;background:#bbb"></div>
<div class="ln" style="left:1029px;top:447px;width:1px;height:261px;background:#bbb"></div>
<div class="c sum" style="left:3px;top:708px;width:1026px;height:25px;background:#fff;line-height:27px;word-spacing:1px;letter-spacing:0.12px">近<span class="cr">10</span>场,胜6平2负2, 胜率:<span class="cr">60%</span> 让胜率:<span class="cr">80%</span> 大率:<span class="cr">10%</span> 单率:<span class="cr">60%</span></div>
<div class="ln" style="left:2px;top:707px;width:1px;height:27px;background:#bbb"></div>
<div class="ln" style="left:1029px;top:707px;width:1px;height:27px;background:#bbb"></div>
<div class="ln" style="left:2px;top:733px;width:1028px;height:1px;background:#bbb"></div>
</body></html>
